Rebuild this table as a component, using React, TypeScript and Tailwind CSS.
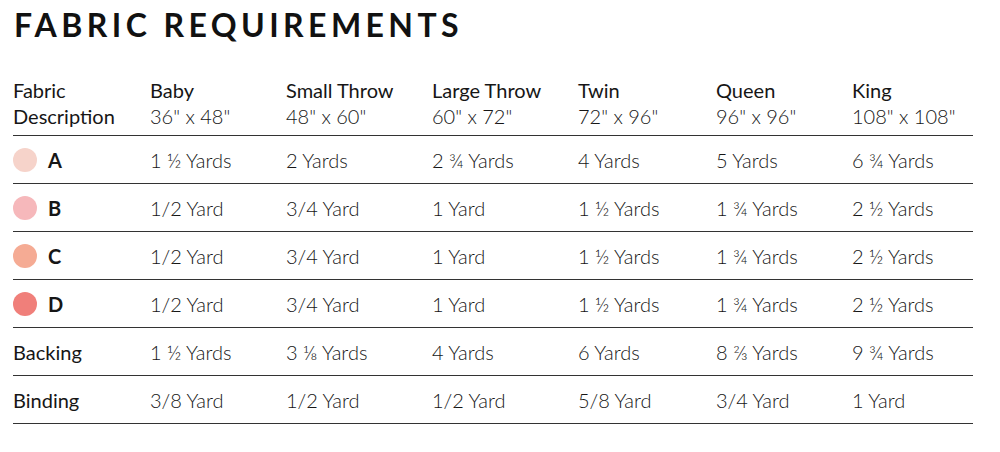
const SIZES = [
  { name: "Baby", dims: "36\" x 48\"" },
  { name: "Small Throw", dims: "48\" x 60\"" },
  { name: "Large Throw", dims: "60\" x 72\"" },
  { name: "Twin", dims: "72\" x 96\"" },
  { name: "Queen", dims: "96\" x 96\"" },
  { name: "King", dims: "108\" x 108\"" },
];

const ROWS: { label: string; dot?: string; values: string[] }[] = [
  { label: "A", dot: "bg-[#f6d3ca]", values: ["1 ½ Yards", "2 Yards", "2 ¾ Yards", "4 Yards", "5 Yards", "6 ¾ Yards"] },
  { label: "B", dot: "bg-[#f6b8bb]", values: ["1/2 Yard", "3/4 Yard", "1 Yard", "1 ½ Yards", "1 ¾ Yards", "2 ½ Yards"] },
  { label: "C", dot: "bg-[#f5ab94]", values: ["1/2 Yard", "3/4 Yard", "1 Yard", "1 ½ Yards", "1 ¾ Yards", "2 ½ Yards"] },
  { label: "D", dot: "bg-[#f07f7a]", values: ["1/2 Yard", "3/4 Yard", "1 Yard", "1 ½ Yards", "1 ¾ Yards", "2 ½ Yards"] },
  { label: "Backing", values: ["1 ½ Yards", "3 ⅛ Yards", "4 Yards", "6 Yards", "8 ⅔ Yards", "9 ¾ Yards"] },
  { label: "Binding", values: ["3/8 Yard", "1/2 Yard", "1/2 Yard", "5/8 Yard", "3/4 Yard", "1 Yard"] },
];

const GRID = "grid grid-cols-[137px_136px_146px_146px_138px_136px_121px]";

export default function App() {
  return (
    <div
      className="w-[1000px] h-[452px] bg-white text-[#161616] pl-[13px] pt-[5px]"
      style={{ fontFamily: "Lato, 'Open Sans', sans-serif" }}
    >
      {/* Title */}
      <h1 className="text-[32px] leading-[40px] font-bold tracking-[0.138em] text-[#111] pl-px">
        FABRIC REQUIREMENTS
      </h1>

      <div className="mt-[32px] w-[960px]">
        {/* Header */}
        <div className={`${GRID} text-[20px] leading-[26px] pb-[6px] border-b-[1.5px] border-[#333]`}>
          <div>
            Fabric
            <br />
            Description
          </div>
          {SIZES.map((s) => (
            <div key={s.name}>
              {s.name}
              <br />
              <span className="font-light">{s.dims}</span>
            </div>
          ))}
        </div>

        {/* Rows */}
        {ROWS.map((r) => (
          <div
            key={r.label}
            className={`${GRID} h-[48px] items-center text-[20px] border-b-[1.5px] border-[#333]`}
          >
            {r.dot ? (
              <div className="flex items-center gap-[11px]">
                <span className={`w-[24px] h-[24px] rounded-full ${r.dot}`} />
                <span className="font-bold">{r.label}</span>
              </div>
            ) : (
              <div>{r.label}</div>
            )}
            {r.values.map((v, i) => (
              <div key={i} className="font-light">
                {v}
              </div>
            ))}
          </div>
        ))}
      </div>
    </div>
  );
}
